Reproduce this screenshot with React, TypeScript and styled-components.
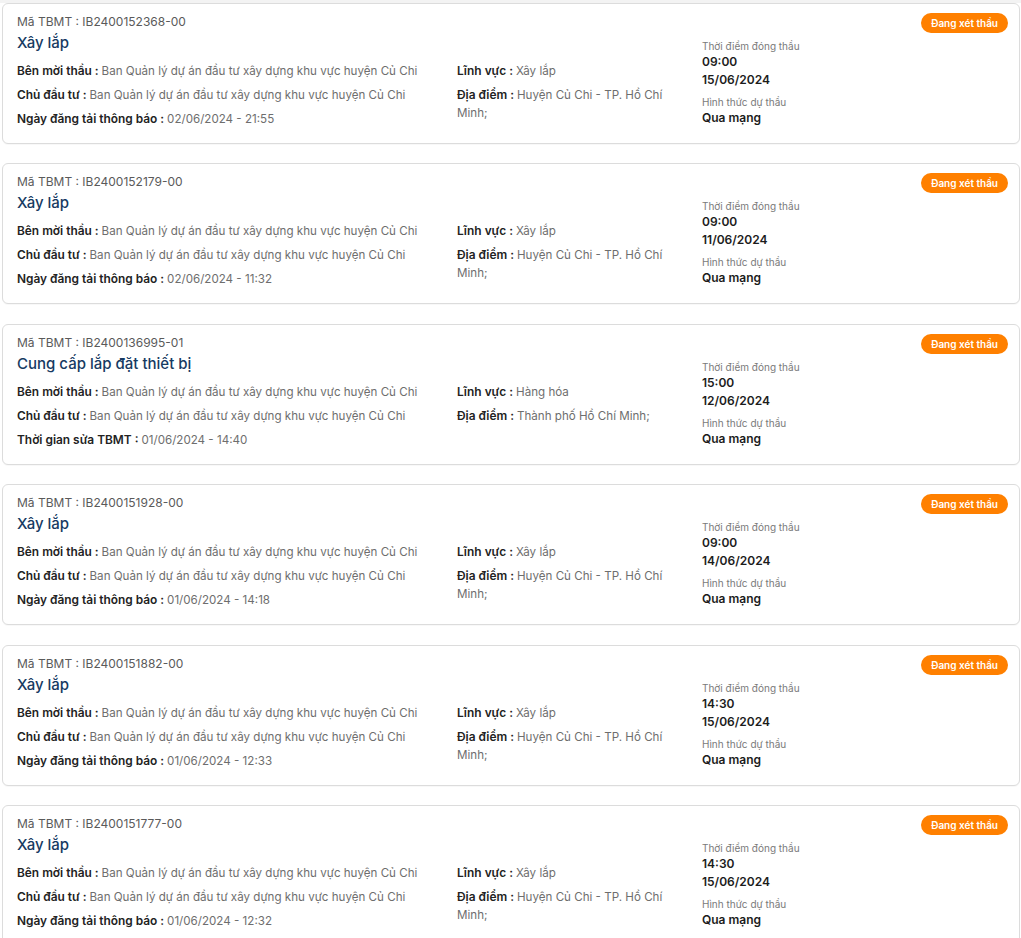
import styled, { createGlobalStyle } from 'styled-components';

type Field = { label: string; value: string };

type Tender = {
  code: string;
  title: string;
  left: Field[];
  middle: Field[];
  time: string;
  date: string;
  method: string;
};

const inviter = 'Ban Quản lý dự án đầu tư xây dựng khu vực huyện Củ Chi';
const place = 'Huyện Củ Chi - TP. Hồ Chí Minh;';

const tenders: Tender[] = [
  {
    code: 'IB2400152368-00',
    title: 'Xây lắp',
    left: [
      { label: 'Bên mời thầu', value: inviter },
      { label: 'Chủ đầu tư', value: inviter },
      { label: 'Ngày đăng tải thông báo', value: '02/06/2024 - 21:55' },
    ],
    middle: [
      { label: 'Lĩnh vực', value: 'Xây lắp' },
      { label: 'Địa điểm', value: place },
    ],
    time: '09:00',
    date: '15/06/2024',
    method: 'Qua mạng',
  },
  {
    code: 'IB2400152179-00',
    title: 'Xây lắp',
    left: [
      { label: 'Bên mời thầu', value: inviter },
      { label: 'Chủ đầu tư', value: inviter },
      { label: 'Ngày đăng tải thông báo', value: '02/06/2024 - 11:32' },
    ],
    middle: [
      { label: 'Lĩnh vực', value: 'Xây lắp' },
      { label: 'Địa điểm', value: place },
    ],
    time: '09:00',
    date: '11/06/2024',
    method: 'Qua mạng',
  },
  {
    code: 'IB2400136995-01',
    title: 'Cung cấp lắp đặt thiết bị',
    left: [
      { label: 'Bên mời thầu', value: inviter },
      { label: 'Chủ đầu tư', value: inviter },
      { label: 'Thời gian sửa TBMT', value: '01/06/2024 - 14:40' },
    ],
    middle: [
      { label: 'Lĩnh vực', value: 'Hàng hóa' },
      { label: 'Địa điểm', value: 'Thành phố Hồ Chí Minh;' },
    ],
    time: '15:00',
    date: '12/06/2024',
    method: 'Qua mạng',
  },
  {
    code: 'IB2400151928-00',
    title: 'Xây lắp',
    left: [
      { label: 'Bên mời thầu', value: inviter },
      { label: 'Chủ đầu tư', value: inviter },
      { label: 'Ngày đăng tải thông báo', value: '01/06/2024 - 14:18' },
    ],
    middle: [
      { label: 'Lĩnh vực', value: 'Xây lắp' },
      { label: 'Địa điểm', value: place },
    ],
    time: '09:00',
    date: '14/06/2024',
    method: 'Qua mạng',
  },
  {
    code: 'IB2400151882-00',
    title: 'Xây lắp',
    left: [
      { label: 'Bên mời thầu', value: inviter },
      { label: 'Chủ đầu tư', value: inviter },
      { label: 'Ngày đăng tải thông báo', value: '01/06/2024 - 12:33' },
    ],
    middle: [
      { label: 'Lĩnh vực', value: 'Xây lắp' },
      { label: 'Địa điểm', value: place },
    ],
    time: '14:30',
    date: '15/06/2024',
    method: 'Qua mạng',
  },
  {
    code: 'IB2400151777-00',
    title: 'Xây lắp',
    left: [
      { label: 'Bên mời thầu', value: inviter },
      { label: 'Chủ đầu tư', value: inviter },
      { label: 'Ngày đăng tải thông báo', value: '01/06/2024 - 12:32' },
    ],
    middle: [
      { label: 'Lĩnh vực', value: 'Xây lắp' },
      { label: 'Địa điểm', value: place },
    ],
    time: '14:30',
    date: '15/06/2024',
    method: 'Qua mạng',
  },
];

function FieldList({ fields }: { fields: Field[] }) {
  return (
    <Column>
      {fields.map((f) => (
        <Row key={f.label}>
          <strong>{f.label} : </strong>
          {f.value}
        </Row>
      ))}
    </Column>
  );
}

export default function App() {
  return (
    <>
      <GlobalStyle />
      <List>
        {tenders.map((t) => (
          <Card key={t.code}>
            <Main>
              <Code>Mã TBMT : {t.code}</Code>
              <Title>{t.title}</Title>
              <Body>
                <FieldList fields={t.left} />
                <FieldList fields={t.middle} />
              </Body>
            </Main>
            <Side>
              <Badge>Đang xét thầu</Badge>
              <Caption>Thời điểm đóng thầu</Caption>
              <Strong>{t.time}</Strong>
              <Strong>{t.date}</Strong>
              <Caption>Hình thức dự thầu</Caption>
              <Strong>{t.method}</Strong>
            </Side>
          </Card>
        ))}
      </List>
    </>
  );
}

const GlobalStyle = createGlobalStyle`
  * { box-sizing: border-box; }
  body {
    margin: 0;
    background: #fff;
    font-family: Inter, "Noto Sans", sans-serif;
  }
`;

const List = styled.div`
  display: flex;
  flex-direction: column;
  gap: 19.4px;
  border-top: 3px solid #f3f3f3;
  padding: 0 1px 20px 2px;
`;

const Card = styled.div`
  display: flex;
  border: 1px solid #dcdcdc;
  border-radius: 6px;
  background: #fff;
  padding: 9px 12px 15px 14px;
  box-shadow: 0 1px 1px rgba(0, 0, 0, 0.03);
`;

const Main = styled.div`
  flex: 1;
  min-width: 0;
`;

const Code = styled.div`
  font-size: 12px;
  line-height: 18px;
  color: #5a5a5a;
`;

const Title = styled.div`
  font-size: 15px;
  line-height: 24px;
  font-weight: 500;
  color: #163a62;
`;

const Body = styled.div`
  display: grid;
  grid-template-columns: 440px 1fr;
  margin-top: 7px;
`;

const Column = styled.div`
  display: flex;
  flex-direction: column;
  gap: 6px;
  padding-right: 16px;
`;

const Row = styled.div`
  font-size: 11.6px;
  line-height: 18px;
  color: #6e6e6e;

  strong {
    font-size: 11.9px;
    font-weight: 600;
    color: #222;
  }
`;

const Side = styled.div`
  width: 305px;
  display: flex;
  flex-direction: column;
  align-items: flex-start;
`;

const Badge = styled.span`
  align-self: flex-end;
  margin-right: -1px;
  height: 20px;
  padding: 0 10px;
  display: inline-flex;
  align-items: center;
  border-radius: 10px;
  background: #ff8000;
  color: #fff;
  font-size: 10px;
  font-weight: 600;
`;

const Caption = styled.div`
  margin-top: 6px;
  font-size: 10px;
  line-height: 14px;
  color: #7a7a7a;
`;

const Strong = styled.div`
  font-size: 12px;
  line-height: 18px;
  font-weight: 600;
  color: #1c1c1c;
`;
